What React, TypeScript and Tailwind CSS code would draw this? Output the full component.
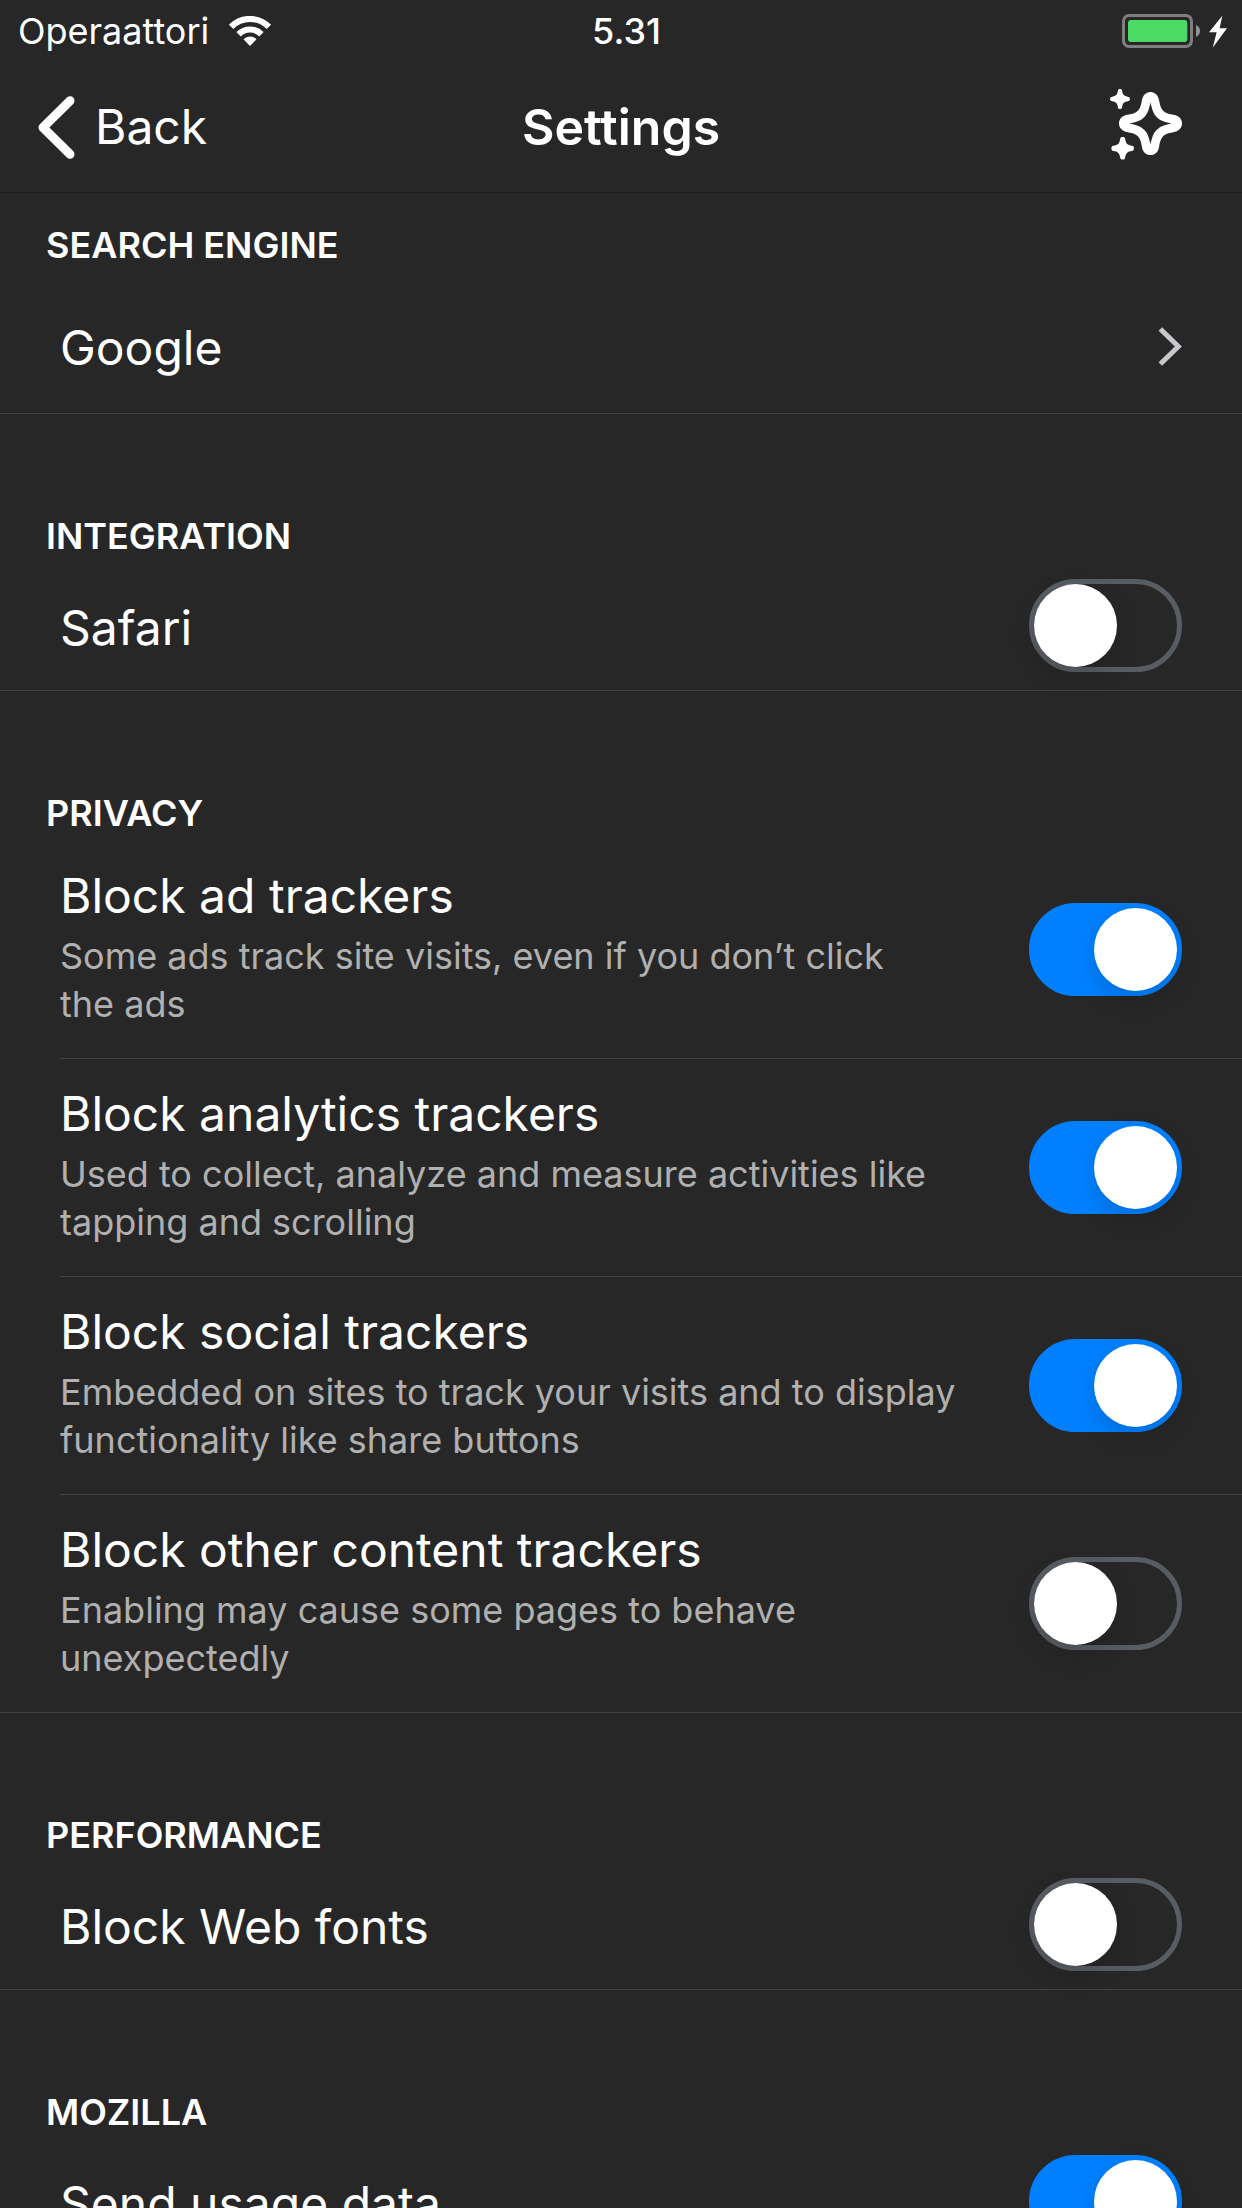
import React, { useId, useState } from "react";

function WifiIcon() {
  return (
    <svg viewBox="684 45 126 90" className="h-[30px] w-[42px]" aria-hidden="true">
      <g fill="none" stroke="#fff" strokeWidth="18.5">
        <path d="M690.4 77.4 A80 80 0 0 1 803.6 77.4" />
        <path d="M712.7 99.7 A48.5 48.5 0 0 1 781.3 99.7" />
      </g>
      <path d="M747 135 L727.5 115 A27 27 0 0 1 766.5 115 Z" fill="#fff" />
    </svg>
  );
}

function BatteryIcon() {
  return (
    <svg viewBox="186 39 315 102" className="h-[34px] w-[105px]" role="img" aria-label="Battery charging">
      <rect x="190.5" y="43.5" width="204" height="93" rx="17" fill="none" stroke="#7f7f7f" strokeWidth="9" />
      <rect x="204" y="57" width="178" height="66" rx="9" fill="#4cd964" />
      <path d="M408 72 C416 76 420 82 420 90 C420 98 416 104 408 108 Z" fill="#939393" />
      <path d="M487 44 L447 94 H470 L458 140 L501 82 H479 Z" fill="#fff" />
    </svg>
  );
}

function BackChevron() {
  return (
    <svg viewBox="114 284 112 190" className="h-[63px] w-[37px]" aria-hidden="true">
      <path d="M211 298 L129 379 L211 460" fill="none" stroke="#fff" strokeWidth="27" strokeLinecap="round" strokeLinejoin="round" />
    </svg>
  );
}

function ForwardChevron() {
  return (
    <svg viewBox="474 81 72 117" className="h-[39px] w-[24px] shrink-0" aria-hidden="true">
      <path d="M481 87 L535 139.500 L481 192" fill="none" stroke="#c7c7cc" strokeWidth="15" />
    </svg>
  );
}

function SparkleIcon() {
  return (
    <svg viewBox="150 267 216 213" className="h-[71px] w-[72px]" fill="#fff" aria-hidden="true">
      <g transform="translate(271.500 370.500)">
        <path
          fillRule="evenodd"
          d="M0 -94.500 C14 -94.500 24 -84 26 -68 C29 -50 33 -43 38 -38 C43 -33 50 -29 68 -26 C84 -24 94.500 -14 94.500 0 C94.500 14 84 24 68 26 C50 29 43 33 38 38 C33 43 29 50 26 68 C24 84 14 94.500 0 94.500 C-14 94.500 -24 84 -26 68 C-29 50 -33 43 -38 38 C-43 33 -50 29 -68 26 C-84 24 -94.500 14 -94.500 0 C-94.500 -14 -84 -24 -68 -26 C-50 -29 -43 -33 -38 -38 C-33 -43 -29 -50 -26 -68 C-24 -84 -14 -94.500 0 -94.500 Z M0 -63 C-6 -34 -12 -26 -19 -19 C-26 -12 -34 -6 -63 0 C-34 6 -26 12 -19 19 C-12 26 -6 34 0 63 C6 34 12 26 19 19 C26 12 34 6 63 0 C34 -6 26 -12 19 -19 C12 -26 6 -34 0 -63 Z"
        />
      </g>
      <path
        transform="translate(180 297)"
        d="M-6 -26 C-5 -31 5 -31 6 -26 C8 -13 10 -9 26 -6 C31 -5 31 5 26 6 C10 9 8 13 6 26 C5 31 -5 31 -6 26 C-8 13 -10 9 -26 6 C-31 5 -31 -5 -26 -6 C-10 -9 -8 -13 -6 -26 Z"
      />
      <path
        transform="translate(188 445)"
        d="M-7 -30 C-6 -35 6 -35 7 -30 C10 -14 12 -10 30 -7 C35 -6 35 6 30 7 C12 10 10 14 7 30 C6 35 -6 35 -7 30 C-10 14 -12 10 -30 7 C-35 6 -35 -6 -30 -7 C-12 -10 -10 -14 -7 -30 Z"
      />
    </svg>
  );
}

function Switch({ id, initial = false, describedBy }: { id: string; initial?: boolean; describedBy?: string }) {
  const [on, setOn] = useState(initial);
  return (
    <input
      id={id}
      type="checkbox"
      role="switch"
      aria-describedby={describedBy}
      checked={on}
      onChange={(e) => setOn(e.target.checked)}
      className="h-[93px] w-[153px] shrink-0 cursor-pointer appearance-none rounded-full border-[5px] border-[#585d63] transition-colors before:block before:size-[83px] before:rounded-full before:bg-white before:shadow-[0_9px_24px_rgba(0,0,0,0.15)] before:transition-transform before:content-[''] checked:border-[#0080ff] checked:bg-[#0080ff] checked:before:translate-x-[60px]"
    />
  );
}

function Section({ title, first = false, children }: { title: string; first?: boolean; children: React.ReactNode }) {
  return (
    <section className="border-b border-[#414143]">
      <h2 className={`px-[46px] text-[36px] leading-[44px] font-semibold uppercase ${first ? "pt-[30px] pb-3" : "pt-[100px] pb-[3px]"}`}>
        {title}
      </h2>
      {children}
    </section>
  );
}

function SwitchRow({ label, initial }: { label: string; initial?: boolean }) {
  const id = useId();
  return (
    <div className="flex min-h-[129px] items-center justify-between px-[60px]">
      <label htmlFor={id} className="pt-1 text-[48px] leading-[56px]">
        {label}
      </label>
      <Switch id={id} initial={initial} />
    </div>
  );
}

function DetailRow({ label, detail, initial }: { label: string; detail: string; initial?: boolean }) {
  const id = useId();
  return (
    <li className="ml-[60px] flex items-center justify-between border-b border-[#414143] pr-[60px] last:border-b-0">
      <div className="pt-[27px] pb-[30px]">
        <label htmlFor={id} className="block text-[48px] leading-[56px]">
          {label}
        </label>
        <p id={`${id}-detail`} className="mt-2 text-[36px] leading-[48px] whitespace-pre-line text-[#b0b0b0]">
          {detail}
        </p>
      </div>
      <Switch id={id} initial={initial} describedBy={`${id}-detail`} />
    </li>
  );
}

const trackers = [
  { label: "Block ad trackers", detail: "Some ads track site visits, even if you don’t click\nthe ads", initial: true },
  { label: "Block analytics trackers", detail: "Used to collect, analyze and measure activities like\ntapping and scrolling", initial: true },
  { label: "Block social trackers", detail: "Embedded on sites to track your visits and to display\nfunctionality like share buttons", initial: true },
  { label: "Block other content trackers", detail: "Enabling may cause some pages to behave\nunexpectedly", initial: false },
];

export default function App() {
  return (
    <div className="flex h-screen flex-col overflow-hidden bg-[#272727] font-['Inter',sans-serif] text-white">
      <div className="grid h-[62px] shrink-0 grid-cols-[1fr_auto_1fr] items-center pr-[15px] pl-[18px] text-[36px] leading-[44px]">
        <div className="flex items-center gap-5">
          <span>Operaattori</span>
          <WifiIcon />
        </div>
        <span className="pl-2 font-medium">5.31</span>
        <div className="flex justify-end">
          <BatteryIcon />
        </div>
      </div>
      <header className="grid h-[131px] shrink-0 grid-cols-[1fr_auto_1fr] items-center border-b border-[#1b1b1b] pr-[60px] pl-[38px]">
        <button type="button" className="flex items-center gap-5 justify-self-start text-[48px] leading-[56px]">
          <BackChevron />
          Back
        </button>
        <h1 className="pl-[22px] text-[50px] leading-[56px] font-semibold">Settings</h1>
        <button type="button" aria-label="What’s new" className="justify-self-end pb-1.5">
          <SparkleIcon />
        </button>
      </header>
      <main className="min-h-0 flex-1 overflow-y-auto [scrollbar-width:none]">
        <Section title="Search engine" first>
          <a href="#search-engine" className="flex min-h-[134px] items-center justify-between px-[60px] text-[48px] leading-[56px]">
            <span className="pt-1">Google</span>
            <ForwardChevron />
          </a>
        </Section>
        <Section title="Integration">
          <SwitchRow label="Safari" />
        </Section>
        <Section title="Privacy">
          <ul className="pt-[3px]">
            {trackers.map((t) => (
              <DetailRow key={t.label} {...t} />
            ))}
          </ul>
        </Section>
        <Section title="Performance">
          <SwitchRow label="Block Web fonts" />
        </Section>
        <Section title="Mozilla">
          <SwitchRow label="Send usage data" initial />
        </Section>
      </main>
    </div>
  );
}
